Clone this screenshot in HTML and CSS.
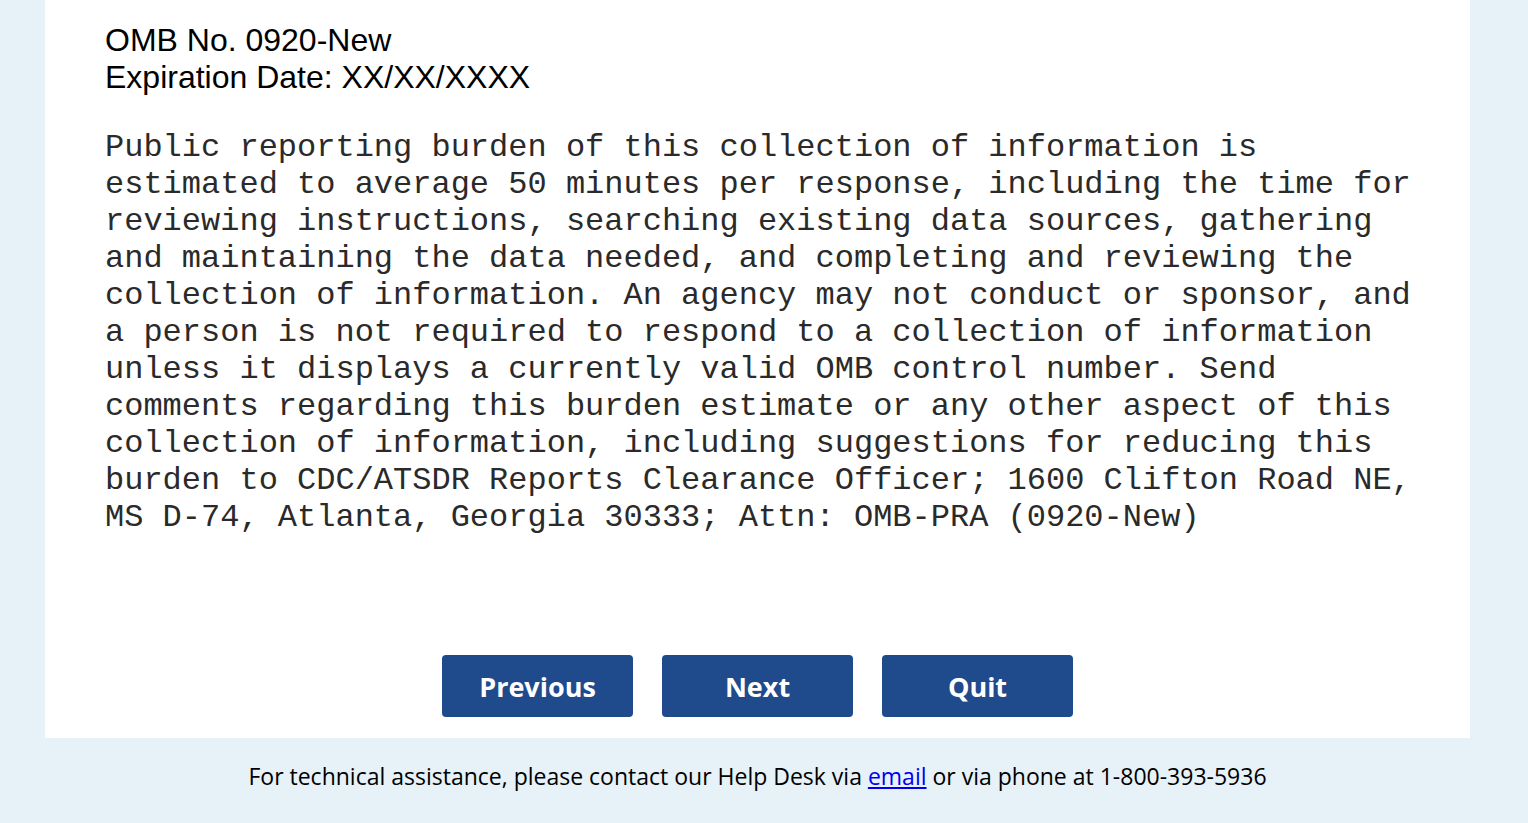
FILE: index.html
```html
<!DOCTYPE html>
<html lang="en">

<head>
    <meta charset="UTF-8">
    <meta name="viewport" content="width=device-width, initial-scale=1.0">
    <title>Public Burden Statement</title>
    <link rel="stylesheet" href="styles.css">
</head>

<body>

    <div class="content-container">
        <div class="omb-info">
            <p>OMB No. 0920-New</p>
            <p>Expiration Date: XX/XX/XXXX</p>
        </div>

        <p class="burden-text">Public reporting burden of this collection of information is estimated to average 50 minutes per response, including the time for reviewing instructions, searching existing data sources, gathering and maintaining the data needed, and completing and reviewing the collection of information. An agency may not conduct or sponsor, and a person is not required to respond to a collection of information unless it displays a currently valid OMB control number. Send comments regarding this burden estimate or any other aspect of this collection of information, including suggestions for reducing this burden to CDC/ATSDR Reports Clearance Officer; 1600 Clifton Road NE, MS D-74, Atlanta, Georgia 30333; Attn: OMB-PRA (0920-New)</p>

        <div class="nav-buttons">
            <button type="button">Previous</button>
            <button type="button">Next</button>
            <button type="button">Quit</button>
        </div>
    </div>

    <footer class="help-desk">
        For technical assistance, please contact our Help Desk via <a href="#">email</a> or via phone at 1-800-393-5936
    </footer>

</body>

</html>
```

FILE: styles.css
```css
/* Resetting basic styles */
* {
    margin: 0;
    padding: 0;
    box-sizing: border-box;
}

body {
    background: #e6f1f8;
    font-family: 'Liberation Sans', Arial, sans-serif;
    color: #000;
}

.content-container {
    width: 1425px;
    margin-left: 45px;
    background: #fff;
    padding: 22px 44px 21px 60px;
}

.omb-info {
    font-size: 32px;
    line-height: 37px;
}

.burden-text {
    margin-top: 33px;
    font-family: 'Liberation Mono', 'Courier New', monospace;
    font-size: 32px;
    line-height: 37px;
    color: #2a2a2a;
}

.nav-buttons {
    display: flex;
    justify-content: center;
    gap: 29px;
    margin-top: 119px;
    margin-left: -16px;
}

.nav-buttons button {
    width: 191px;
    height: 62px;
    background-color: #1f4a8c;
    color: #fff;
    border: none;
    border-radius: 4px;
    font-family: 'Open Sans', sans-serif;
    font-weight: 700;
    font-size: 27px;
    cursor: pointer;
}

.help-desk {
    width: 1425px;
    margin-left: 45px;
    padding-top: 22px;
    text-align: center;
    font-family: 'Open Sans', sans-serif;
    font-size: 23px;
    line-height: 32px;
}

.help-desk a {
    color: #00e;
}
```
